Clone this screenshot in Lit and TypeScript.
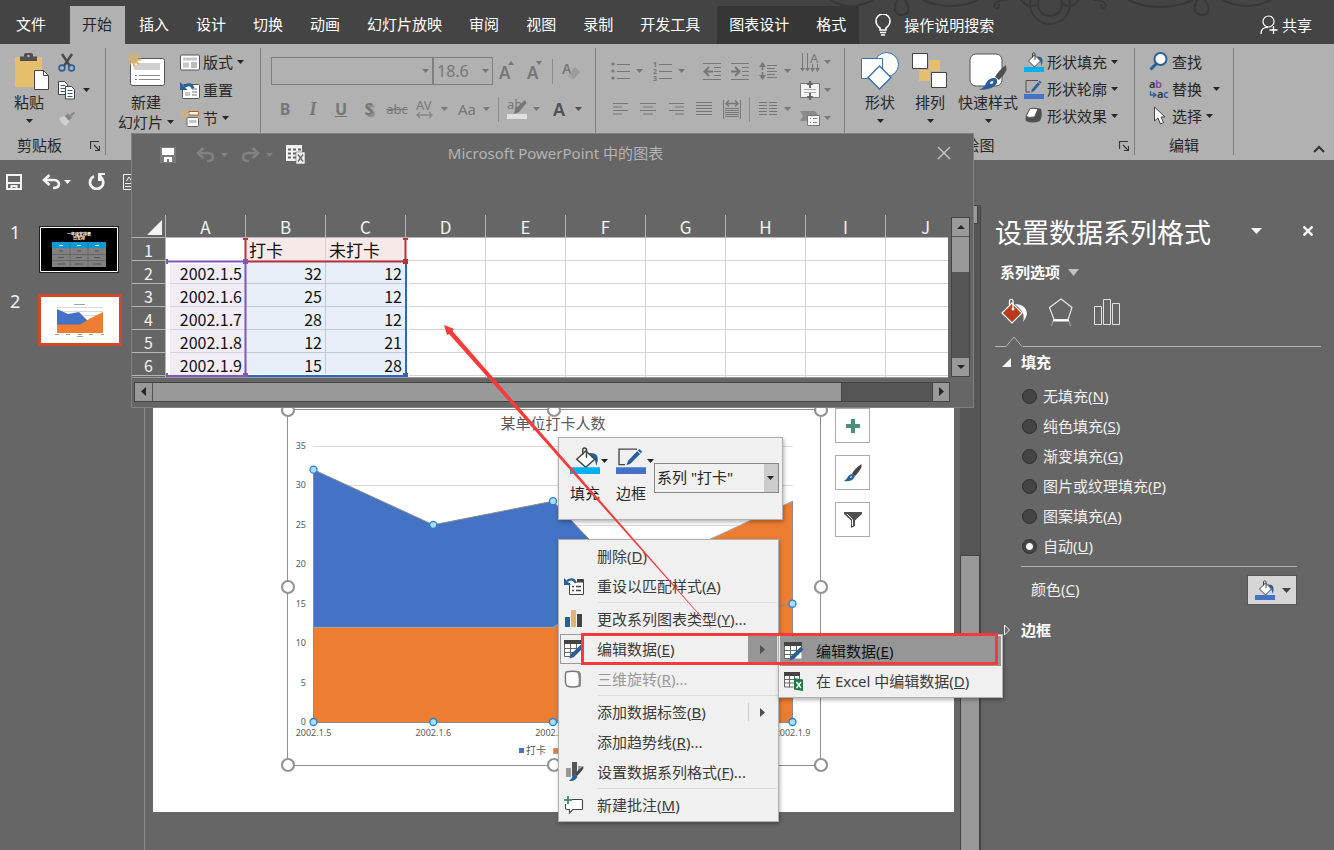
import { LitElement, html, svg, css, nothing } from "lit";
import { customElement, state } from "lit/decorators.js";

const caret = html`<svg class="caret" width="7" height="4" viewBox="0 0 7 4"><path d="M0 0h7L3.5 4z" fill="currentColor"/></svg>`;

const ic = (w: number, h: number, body: unknown) =>
  html`<svg class="ic" width=${w} height=${h} viewBox="0 0 ${w} ${h}" fill="none" aria-hidden="true">${body}</svg>`;

const bucket = (bar: string, w = 20, h = 20) => html`<svg class="ic" width=${w} height=${h} viewBox="0 0 20 20" fill="none" preserveAspectRatio="none" aria-hidden="true">
  <path d="M12.500 4.500C18 4 20 7 17.500 14C17 10 16 8 14.500 7z" fill="#2a6099"/>
  <path d="M10.500 3L16.500 9L10.500 15L4.500 9z" fill="#fff" stroke="#444" stroke-width="1"/>
  <path d="M8.500 5.500V1.500Q9.500 0 11 1.500V8" stroke="#444" stroke-width="1"/>
  <rect y="15" width="20" height="5" fill=${bar}/></svg>`;

const outline = (w = 20, h = 20) => html`<svg class="ic" width=${w} height=${h} viewBox="0 0 20 20" fill="none" preserveAspectRatio="none" aria-hidden="true">
  <path d="M14 1.500H2V13H6" stroke="#444" stroke-width=".9"/>
  <path d="M7 13.500L8 10.200L15.500 1.500L17.500 3.500L9.800 12.300z" fill="#2a6099"/>
  <path d="M14.300 2.800L16.300 4.900" stroke="#eee" stroke-width=".7"/>
  <rect y="15" width="20" height="5" fill="#4472c4"/></svg>`;

const sheetPen = svg`<path d="M.5 .5h17v16H.5z" fill="#fff"/><path d="M0 0h18v4H0z" fill="#444"/><path d="M.5 4v12.500h8M.5 8.500h17M.5 12.500h12M6.500 4v12.500M12.500 4v8M17.500 4v6" stroke="#666"/><path d="M5.500 18.500L7 14L16.500 5L19.500 7.500L10 17z" fill="#2a6099"/>`;

const icons = {
  paste: html`<svg class="ic" width="40" height="40" viewBox="-6 0 40 40" fill="none" aria-hidden="true"><path d="M0 5h27v30H0z" fill="#e6bf6d"/><path d="M5 9V4.500h4V2.500Q9 1 11 1h5Q18 1 18 2.500v2h4V9z" fill="#505050"/><circle cx="13.500" cy="4" r="1.300" fill="#b1b1b1"/><path d="M19.500 18.500h9l5 5V37.500h-14z" fill="#fff" stroke="#444"/><path d="M28.500 18.500v5h5" stroke="#444"/></svg>`,
  cut: ic(18, 19, svg`<path d="M4 1L12 13M14 1L6 13" stroke="#4a4a4a" stroke-width="2.400"/><circle cx="4" cy="15" r="2.900" stroke="#2a6099" stroke-width="1.600"/><circle cx="13.500" cy="15" r="2.900" stroke="#2a6099" stroke-width="1.600"/>`),
  copy: ic(18, 19, svg`<path d="M.5 .5h6l3 3v10h-9z" fill="#fff" stroke="#444"/><path d="M2.500 4.500h5M2.500 7.500h5M2.500 10.500h5" stroke="#2a6099"/><path d="M7.500 5.500h6l3 3v9.500h-9z" fill="#fff" stroke="#444"/><path d="M9.500 9.500h5M9.500 12.500h5M9.500 15.500h5" stroke="#2a6099"/>`),
  painter: ic(18, 17, svg`<path d="M1 8.500L6 6L11.500 11.500L8 16Q3 14 1 8.500z" fill="#d0d0d0"/><path d="M7 6L10 3.500L14 7.500L11 10.500z" fill="#858585"/><path d="M12 5L16 1.500L17 3L13.500 6.500z" fill="#858585"/>`),
  newSlide: ic(38, 40, svg`<rect x="3.500" y="6.500" width="34" height="27" rx="2" fill="#fff" stroke="#555"/><path d="M13 11h20v7H7v-4z" fill="#d0d0d0"/><path d="M8 23.500h2M12 23.500h21M8 27.500h2M12 27.500h21" stroke="#888"/><g stroke="#e0b060" stroke-width="2"><circle cx="7" cy="7.500" r="3.200" fill="#b1b1b1"/><path d="M7 .5v3M7 11.500v3M0 7.500h3M11 7.500h3M2 2.500l2 2M10 10.500l2 2M12 2.500l-2 2M4 10.500l-2 2"/></g>`),
  layout: ic(20, 17, svg`<rect x=".5" y="1" width="19" height="15" rx="1" fill="#fff" stroke="#555"/><path d="M3 3.500h14v3H3zM3 8.500h6v5H3z" fill="#c8c8c8"/><path d="M11 9h6M11 11h6M11 13h6" stroke="#777"/>`),
  reset: ic(20, 18, svg`<rect x="2.500" y="3.500" width="17" height="14" rx="1" fill="#fff" stroke="#555"/><path d="M5 11h5v4H5z" fill="#c8c8c8"/><path d="M12 8h5M12 11h5M12 14h5" stroke="#777"/><path d="M13 7.500Q11 1 4 5.500" stroke="#2a6099" stroke-width="3"/><path d="M0 1v8h7.500z" fill="#2a6099"/>`),
  section: ic(20, 18, svg`<path d="M9 2.500h9.500v3.500H9z" fill="#fff" stroke="#c55a11"/><rect x="7" y="8.500" width="11.500" height="9" rx="1" fill="#fff" stroke="#666"/><path d="M9 11h7.500v3H9z" fill="#c8c8c8"/><g stroke="#e0b060"><circle cx="4.500" cy="4.500" r="2"/><path d="M4.500 0v2M4.500 7v2M0 4.500h2M7 4.500h2M1.500 1.500l1.500 1.500M6 6l1.500 1.500M7.500 1.500L6 3M3 6L1.500 7.500"/></g>`),
  grow: ic(16, 22, svg`<text x="0" y="19" class="gA">A</text><path d="M9 5h6L12 1z" fill="#777"/>`),
  shrink: ic(16, 22, svg`<text x="0" y="19" class="gA">A</text><path d="M9 1h6L12 5z" fill="#777"/>`),
  eraser: ic(22, 22, svg`<text x="2" y="14" class="gB">A</text><path d="M9 15L15 7L20 12L14 19H11L7 15z" fill="#9c9c9c"/><path d="M7 16L10 14L14 18L12 20z" fill="#a6a6a6"/>`),
  av: ic(22, 24, svg`<text x="2" y="13" class="gC">AV</text><path d="M3 18h15M6 15l-3 3l3 3M15 15l3 3l-3 3" stroke="#888" stroke-width="1.300"/>`),
  high: ic(20, 24, svg`<text x="0" y="12" class="gC">ab</text><path d="M8 12L18 3L19.500 6L12 15L7 17z" fill="#777"/><path d="M0 17h20v5H0z" fill="#e0e0e0"/>`),
  bullets: ic(19, 18, svg`<g fill="#777"><circle cx="2" cy="2" r="1.600"/><circle cx="2" cy="9" r="1.600"/><circle cx="2" cy="16" r="1.600"/></g><path d="M6 2.500h13M6 9.500h13M6 16.500h13" stroke="#777"/>`),
  numbers: ic(19, 22, svg`<text x="0" y="7" class="gN">1</text><text x="0" y="14" class="gN">2</text><text x="0" y="21" class="gN">3</text><path d="M6 4.500h13M6 11.500h13M6 18.500h13" stroke="#777"/>`),
  outdent: ic(18, 17, svg`<path d="M0 .5h18M0 16.500h18M11 4.500h7M11 8.500h7M11 12.500h7" stroke="#777"/><path d="M10 8.500H3M6 4L1.500 8.500L6 13" stroke="#777" stroke-width="2"/>`),
  indent: ic(18, 17, svg`<path d="M0 .5h18M0 16.500h18M11 4.500h7M11 8.500h7M11 12.500h7" stroke="#777"/><path d="M0 8.500H7M4 4L8.500 8.500L4 13" stroke="#777" stroke-width="2"/>`),
  spacing: ic(18, 18, svg`<path d="M8 3.500h10M8 6.500h8M8 9.500h10M8 12.500h8M8 15.500h10" stroke="#777"/><path d="M3.500 1v7M3.500 10v7" stroke="#777" stroke-width="1.600"/><path d="M0 5L3.500 0L7 5zM0 13L3.500 18L7 13z" fill="#777"/>`),
  left: ic(15, 12, svg`<path d="M0 .5h15M0 4h9M0 7.500h15M0 11h9" stroke="#777"/>`),
  center: ic(16, 12, svg`<path d="M0 .5h16M3 4h10M0 7.500h16M3 11h10" stroke="#777"/>`),
  right: ic(15, 12, svg`<path d="M0 .5h15M6 4h9M0 7.500h15M6 11h9" stroke="#777"/>`),
  justify: ic(16, 14, svg`<path d="M0 .5h16M0 3.500h16M0 6.500h16M0 9.500h16M0 12.500h16" stroke="#777"/>`),
  distribute: ic(18, 19, svg`<path d="M.5 0v19M17.500 0v19" stroke="#777"/><path d="M2 8.500h14M2 10.500h14M2 12.500h14M2 14.500h14M2 16.500h14" stroke="#777"/><path d="M3 3.500h12M6 .5l-3 3l3 3M12 .5l3 3l-3 3" stroke="#777" stroke-width="1.500"/>`),
  columns: ic(18, 14, svg`<path d="M0 .5h8M0 3.500h8M0 6.500h8M0 9.500h8M0 12.500h8M10 .5h8M10 3.500h8M10 6.500h8M10 9.500h8M10 12.500h8" stroke="#777"/>`),
  textDir: ic(20, 24, svg`<path d="M2.500 3v18M7.500 3v18M12.500 14v8M17.500 14v8" stroke="#777"/><path d="M0 18l2.500 3.500L5 18zM5 18l2.500 3.500L10 18zM10 18l2.500 3.500L15 18zM15 18l2.500 3.500L20 18z" fill="#777"/><text x="10" y="13" class="gC">A</text>`),
  alignText: ic(20, 19, svg`<path d="M.5 2.500h19v14H.5z" fill="#f2f2f2" stroke="#777"/><path d="M4 8.500h12M4 11.500h12" stroke="#aaa"/><path d="M10 0v7M10 12v7" stroke="#666" stroke-width="2"/><path d="M6.500 4L10 0l3.500 4zM6.500 15L10 19l3.500-4z" fill="#666"/>`),
  smartArt: ic(20, 17, svg`<path d="M0 1h15l3 4v6H0l3-5z" fill="#8a8a8a"/><path d="M7.500 5.500h12v10h-12z" fill="#f2f2f2" stroke="#777"/><path d="M10 8.500h1M13 8.500h4M10 12.500h1M13 12.500h4" stroke="#888"/>`),
  shapes: ic(38, 40, svg`<circle cx="25.500" cy="12.500" r="12" fill="#fff" stroke="#3a6fa8"/><path d="M.5 6.500h21v20H.5z" fill="#fff" stroke="#3a6fa8"/><path d="M18.500 14L30 25.500L18.500 37L7 25.500z" fill="#fff" stroke="#3a6fa8" stroke-width="1.400"/>`),
  arrange: ic(36, 40, svg`<path d="M17 8h11v11H17zM7 18h11v11H7z" fill="#e6bf6d"/><path d="M.5 1.500h15v15H.5zM19.500 20.500h15v15h-15z" fill="#fff" stroke="#444"/>`),
  quick: ic(38, 40, svg`<rect x="1" y="2" width="32" height="32" rx="6" fill="#fff" stroke="#555"/><path d="M37 13Q30 18 26 25L30 28Q36 22 37.500 18z" fill="#505050"/><path d="M25 26Q29 26 28 31Q25 38 10 38Q16 35 17 31Q20 26 25 26z" fill="#2a6099"/><path d="M24 29Q21 29 21 32Q25 32 24 29z" fill="#fff"/>`),
  effect: ic(20, 18, svg`<path d="M6 1Q12 0 17 2Q19 8 16 14Q8 17 2 14Q0 11 6 1z" fill="#505050"/><path d="M6 1.500Q10 1 14 2L10.500 10Q6 11 2 9.500z" fill="#fff" stroke="#444" stroke-width=".8"/>`),
  find: ic(20, 19, svg`<circle cx="11.500" cy="7" r="6" fill="#fff" stroke="#2a6099" stroke-width="2"/><path d="M7.500 11.500L1.500 17.500" stroke="#2a6099" stroke-width="3"/>`),
  replace: ic(20, 24, svg`<text x="0" y="11" class="gR">a</text><text x="6" y="11" class="gR gP">b</text><text x="8" y="21" class="gR">a</text><text x="14" y="21" class="gR gBlue">c</text><path d="M1.500 14v4h5M4 15.500l3 2.500l-3 2.500" stroke="#2a6099" stroke-width="1.300"/>`),
  select: ic(20, 19, svg`<path d="M5.500 1v14l3.500-3l2.500 6l3-1.500l-2.500-5.500h4z" fill="#fff" stroke="#444"/>`),
  save: ic(16, 16, svg`<path d="M1 1h14v14H1z" stroke="#f2f2f2" stroke-width="2"/><path d="M2 9h12" stroke="#f2f2f2" stroke-width="2"/><path d="M5.500 15v-3h5v3" stroke="#f2f2f2" stroke-width="2"/>`),
  undo: ic(19, 16, svg`<path d="M2 6H12Q17 6.500 17 10.500Q16.500 14 11 14" stroke="currentColor" stroke-width="2.600"/><path d="M7.500 1L2 6l5.500 5" stroke="currentColor" stroke-width="2.600"/>`),
  redoTurn: ic(18, 17, svg`<path d="M6 3.300A6.600 6.600 0 1 0 12.500 4" stroke="#f2f2f2" stroke-width="2.800"/><path d="M10 0h7v2h-3.500v6H10z" fill="#f2f2f2"/>`),
  page: ic(14, 16, svg`<path d="M.5 .5h13v15H.5z" stroke="#f2f2f2"/><path d="M3.500 7l2.500-4l2.500 4M2 9.500h10M2 12.500h10" stroke="#f2f2f2"/>`),
  redo: ic(19, 16, svg`<path d="M17 6H7Q2 6.500 2 10.500Q2.500 14 8 14" stroke="currentColor" stroke-width="2.600"/><path d="M11.500 1L17 6l-5.500 5" stroke="currentColor" stroke-width="2.600"/>`),
  saveLit: ic(16, 16, svg`<path d="M0 0h16v16H0z" fill="#7a7a7a"/><path d="M2 1h12v7H2zM4 10h8v5H9v-3H7v3H4z" fill="#fff"/>`),
  excelSheet: ic(20, 20, svg`<path d="M0 0h16v16H0z" fill="#f2f2f2"/><path d="M2 4.500h3M7 4.500h3M12 4.500h3M2 8.500h3M7 8.500h3M12 8.500h3M2 12.500h3M7 12.500h3" stroke="#666" stroke-width="2"/><path d="M10 7h9v12h-9z" fill="#f2f2f2" stroke="#666" stroke-width=".6"/><path d="M12 9.500l5 7M17 9.500l-5 7" stroke="#666" stroke-width="1.400"/>`),
  menuReset: ic(20, 19, svg`<path d="M5.500 6V17.500h14V2.500H13" fill="#fff" stroke="#444"/><path d="M13 4h6" stroke="#444" stroke-width="3"/><path d="M8 9.500h2M8 13.500h2M12 9.500h5M12 13.500h5" stroke="#444" stroke-width="1.300"/><path d="M12 6Q9 0 3 4" stroke="#2a6099" stroke-width="2.400"/><path d="M0 1v7h7z" fill="#2a6099"/>`),
  menuChart: ic(20, 18, svg`<path d="M1 7h5v10H1z" fill="#2a6099"/><path d="M7 0h5v17H7z" fill="#dfb571"/><path d="M13 4h5v13h-5z" fill="#444"/>`),
  menuEdit: ic(20, 19, sheetPen),
  menuRotate: ic(20, 19, svg`<path d="M2 2Q9 .5 15 2Q17 9 15.500 16Q8 18 3 16Q1 14 1.500 10Q1 5 2 2z" fill="#fafafa" stroke="#777" stroke-width="1.400"/><path d="M13 1.500Q17.500 2 17 5V14Q17 17 14 17Q16 9 13 1.500z" fill="#888"/>`),
  menuFormat: ic(20, 20, svg`<path d="M2 6h5v9H2z" fill="#999"/><path d="M8 0h5v11l-3 3H8z" fill="#555"/><path d="M14 4h4l-4 5z" fill="#999"/><path d="M19 4Q14 8 11 12l2 2Q18 9 19.500 6z" fill="#444"/><path d="M11 12.500Q15 14 12 17Q9 20 5 18.500Q8 17 8 15Q9 12.500 11 12.500z" fill="#2a6099"/>`),
  menuComment: ic(20, 19, svg`<path d="M8 3.500H17.500Q18.500 3.500 18.500 4.500V12.500Q18.500 13.500 17.500 13.500H9L5.500 17V13.500H3.500Q1.500 13.500 1.500 12V8" fill="#fff" stroke="#444" stroke-width="1.100"/><path d="M4 0v8M0 4h8" stroke="#4c9077" stroke-width="2"/>`),
  menuExcel: ic(20, 19, svg`<path d="M.5 .5h15v14H.5z" fill="#fff"/><path d="M0 0h16v4H0z" fill="#444"/><path d="M.5 4v11h9M.5 7.500h15M.5 11h10M5.500 4v11M10.500 4v5M15.500 4v4" stroke="#666"/><path d="M10 6l9 1.500v11.500l-9-1.500z" fill="#1d7a46"/><path d="M12.500 10l4.500 6M17 10l-4.500 6" stroke="#fff" stroke-width="1.400"/>`),
};

const key = (text: string, letter: string, tail = "") => html`${text}(<u>${letter}</u>)${tail}`;

const sharedText = css`
  button { background: none; border: 0; padding: 0; margin: 0; font: inherit; color: inherit; display: flex; align-items: center; white-space: nowrap; }
  .ic, .caret { flex: none; display: block; }
`;

@customElement("office-ribbon")
class OfficeRibbon extends LitElement {
  static styles = [sharedText, css`
    :host { display: block; color: #262626; }
    .tabs { display: flex; gap: 2px; height: 38px; padding-top: 6px; background: #444; color: #fff; position: relative; }
    .swirl { position: absolute; top: 0; left: 815px; }
    .tab { padding: 0 13px 3px 12px; height: 38px; box-sizing: border-box; }
    .file { padding-left: 16px; padding-right: 22px; }
    .active { background: #b1b1b1; color: #262626; }
    .context { display: flex; gap: 2px; margin-left: 2px; background: #363636; }
    .tell { gap: 13px; padding-left: 14px; padding-bottom: 1px; position: relative; }
    .share { gap: 4px; margin-left: auto; margin-right: 22px; position: relative; }
    .ribbon { display: flex; height: 112px; padding-top: 4px; background: #b1b1b1; }
    .group { display: flex; flex-direction: column; height: 107px; border-right: 1px solid #7d7d7d; box-sizing: border-box; }
    .body { display: flex; height: 90px; }
    .foot { display: grid; grid-template-columns: 1fr 20px; line-height: 19px; height: 19px; text-align: center; }
    .foot button { justify-content: center; }
    .clip { width: 106px; } .clip .foot span { padding-right: 6px; }
    .slides { width: 155px; } .slides .body { padding-left: 6px; }
    .font { width: 335px; color: #777; } .para { width: 249px; color: #777; }
    .draw { width: 290px; } .draw .body { padding-left: 7px; }
    .edit { width: 99px; } .edit .foot { grid-template-columns: 1fr; }
    .edit .body { padding-left: 14px; }
    .big { flex-direction: column; padding-top: 4px; height: 84px; width: 58px; line-height: 20px; }
    .big.w68 { width: 68px; } .big.w56 { width: 56px; } .big.w44 { width: 44px; } .big.w72 { width: 72px; }
    .big .caret { margin-top: 7px; }
    .big .line { display: flex; align-items: center; gap: 4px; }
    .big .line .caret { margin-top: 0; }
    .stack { display: flex; flex-direction: column; align-items: flex-start; }
    .stack button { height: 28px; gap: 3px; }
    .stack.low button { height: 27px; }
    .stack .caret { margin-left: 1px; }
    .stack .far { margin-left: 4px; }
    .para .stack { padding-left: 4px; }
    .rows { display: block; }
    .row { display: flex; align-items: center; height: 46px; padding-left: 10px; }
    .row.second { height: 30px; }
    .cell { width: 28px; height: 26px; justify-content: center; }
    .drop { width: 42px; height: 26px; }
    .drop .hold { width: 28px; display: flex; justify-content: center; margin-right: 2px; }
    .sep { width: 1px; height: 25px; background: #8c8c8c; margin: 0 4px 0 3px; }
    .clear { background: none; }
    .box { position: relative; display: flex; align-items: center; }
    .box .caret { position: absolute; right: 4px; pointer-events: none; }
    select { appearance: none; background: #b1b1b1; border: 1px solid #808080; border-radius: 0; height: 28px; padding: 0 0 0 3px; font: 16px "Noto Sans", sans-serif; color: #777; margin: 0; opacity: 1; }
    .name { width: 162px; } .size { width: 60px; }
    .b { font-weight: 700; font-size: 16px; } .i { font-style: italic; font-family: "Liberation Serif", serif; font-size: 18px; }
    .ul { text-decoration: underline; } .sh { text-shadow: 2px 2px 1px #888; } .st { text-decoration: line-through; font-size: 13px; }
    .dark { color: #505050; font-size: 18px; font-weight: 600; }
    .gA { font: 600 17px "Noto Sans", sans-serif; fill: #777; } .gB { font: 600 14px "Noto Sans", sans-serif; fill: #777; }
    .gC { font: 13px "Noto Sans", sans-serif; fill: #777; } .gN { font: bold 7px "Noto Sans", sans-serif; fill: #777; }
    .gR { font: 600 11px "Noto Sans", sans-serif; fill: #333; } .gP { fill: #7a4a9e; } .gBlue { fill: #2a6099; }
    .collapse { margin: auto 9px 7px auto; }
  `];

  private tab(t: string, cls = "") { return html`<button class="tab ${cls}">${t}</button>`; }
  private cell(c: unknown, label: string, cls = "") { return html`<button class="cell ${cls}" aria-label=${label}>${c}</button>`; }
  private drop(c: unknown, label: string, cls = "") { return html`<button class="drop ${cls}" aria-label=${label}><span class="hold">${c}</span>${caret}</button>`; }
  private launcher = html`<button aria-label="launcher">${ic(10, 10, svg`<path d="M.5 8V.5H9M4 4l5 5M9.500 5v4.500H5" stroke="#333" stroke-width="1.200"/>`)}</button>`;

  render() {
    const i = icons;
    return html`
      <nav class="tabs">
        <svg class="swirl" width="500" height="30" fill="none" stroke="#383838" stroke-width="2">
          <path d="M15 0Q35 12 58 0M313 0Q345 14 378 0M408 0Q432 12 456 0M108 0Q135 12 164 0"/>
          <path d="M84 -2C76 8 80 15 87 15C94 15 97 8 88 -2M384 -2C376 8 380 15 387 15C394 15 397 8 388 -2"/>
          <circle cx="235" cy="4" r="20"/><circle cx="235" cy="4" r="12"/>
          <path d="M192 0Q180 0 179 6Q184 12 184 4M206 0Q214 10 222 4M248 4Q256 10 264 0M278 0Q290 0 291 6Q286 12 286 4"/>
        </svg>
        ${this.tab("文件", "file")}${this.tab("开始", "active")}
        ${["插入", "设计", "切换", "动画", "幻灯片放映", "审阅", "视图", "录制", "开发工具"].map((t) => this.tab(t))}
        <span class="context">${this.tab("图表设计")}${this.tab("格式")}</span>
        <button class="tell">${ic(16, 22, svg`<path d="M5 16V14Q1 11 1 7A7 7 0 0 1 15 7Q15 11 11 14V16z" stroke="#fff" stroke-width="1.600"/><path d="M5 18.500h6M6 21h4" stroke="#fff" stroke-width="1.500"/>`)}操作说明搜索</button>
        <button class="share">${ic(18, 20, svg`<circle cx="8.500" cy="6.500" r="5.500" stroke="#fff" stroke-width="1.200"/><path d="M1 19Q1 12 8 12.500M13.500 11v8M9.500 15h8" stroke="#fff" stroke-width="1.300"/>`)}共享</button>
      </nav>
      <div class="ribbon">
        <section class="group clip">
          <div class="body">
            <button class="big">${i.paste}<span>粘贴</span>${caret}</button>
            <div class="stack"><button aria-label="cut">${i.cut}</button><button aria-label="copy">${i.copy}<span></span>${caret}</button><button aria-label="painter">${i.painter}</button></div>
          </div>
          <div class="foot"><span>剪贴板</span>${this.launcher}</div>
        </section>
        <section class="group slides">
          <div class="body">
            <button class="big w68">${i.newSlide}<span>新建</span><span class="line">幻灯片${caret}</span></button>
            <div class="stack"><button>${i.layout}版式${caret}</button><button>${i.reset}重置</button><button>${i.section}节${caret}</button></div>
          </div>
        </section>
        <section class="group font">
          <div class="rows">
            <div class="row">
              <span class="box"><select class="name" aria-label="font"><option></option></select>${caret}</span>
              <span class="box"><select class="size" aria-label="size"><option>18.6</option></select>${caret}</span>
              ${this.cell(i.grow, "grow")}${this.cell(i.shrink, "shrink")}<span class="sep"></span>${this.cell(i.eraser, "clear")}
            </div>
            <div class="row second">
              ${this.cell("B", "bold", "b")}${this.cell("I", "italic", "b i")}${this.cell("U", "underline", "b ul")}${this.cell("S", "shadow", "b sh")}${this.cell("abc", "strike", "st")}
              ${this.drop(i.av, "spacing")}${this.drop("Aa", "case")}<span class="sep"></span>${this.drop(i.high, "highlight")}${this.drop("A", "color", "dark")}
            </div>
          </div>
        </section>
        <section class="group para">
          <div class="body">
            <div class="rows">
              <div class="row">${this.drop(i.bullets, "bullets")}${this.drop(i.numbers, "numbering")}<span class="sep clear"></span>${this.cell(i.outdent, "outdent")}${this.cell(i.indent, "indent")}${this.drop(i.spacing, "line")}</div>
              <div class="row second">${this.cell(i.left, "left")}${this.cell(i.center, "center")}${this.cell(i.right, "right")}${this.cell(i.justify, "justify")}${this.cell(i.distribute, "distribute")}<span class="sep"></span>${this.drop(i.columns, "columns")}</div>
            </div>
            <div class="stack">
              <button aria-label="direction">${i.textDir}${caret}</button><button aria-label="align text">${i.alignText}${caret}</button><button aria-label="smartart">${i.smartArt}${caret}</button>
            </div>
          </div>
        </section>
        <section class="group draw">
          <div class="body">
            <button class="big w56">${i.shapes}<span>形状</span>${caret}</button>
            <button class="big w44">${i.arrange}<span>排列</span>${caret}</button>
            <button class="big w72">${i.quick}<span>快速样式</span>${caret}</button>
            <div class="stack low"><button>${bucket("#00b0f0")}形状填充${caret}</button><button>${outline()}形状轮廓${caret}</button><button>${i.effect}形状效果${caret}</button></div>
          </div>
          <div class="foot"><span>绘图</span>${this.launcher}</div>
        </section>
        <section class="group edit">
          <div class="body"><div class="stack low"><button>${i.find}查找</button><button>${i.replace}替换<span class="far"></span>${caret}</button><button>${i.select}选择${caret}</button></div></div>
          <div class="foot"><span>编辑</span></div>
        </section>
        <button class="collapse" aria-label="collapse">${ic(12, 8, svg`<path d="M1 7l5-5l5 5" stroke="#333" stroke-width="2"/>`)}</button>
      </div>`;
  }
}

@customElement("series-chart")
class SeriesChart extends LitElement {
  static styles = css`
    :host { display: block; }
    svg { display: block; }
    .t { font: 15px "Noto Sans CJK SC", sans-serif; fill: #595959; }
    .ax { font: 9px "Noto Sans", "Noto Sans CJK SC", sans-serif; fill: #595959; }
    .lg { font: 10px "Noto Sans CJK SC", sans-serif; fill: #595959; }
  `;
  private labels = ["2002.1.5", "2002.1.6", "2002.1.7", "2002.1.8", "2002.1.9"];
  private a = [32, 25, 28, 12, 15];
  private b = [12, 12, 12, 21, 28];
  render() {
    const x = (k: number) => 35.5 + k * 119.75;
    const y = (v: number) => 323 - v * 7.886;
    const area = (d: number[]) => `${x(0)},${y(0)} ${d.map((v, k) => `${x(k)},${y(v)}`).join(" ")} ${x(4)},${y(0)}`;
    const line = (d: number[]) => d.map((v, k) => `${x(k)},${y(v)}`).join(" ");
    return html`<svg width="553" height="376" viewBox="0 0 553 376" fill="none">
      <path d="M9.500 10.500h533v356h-533z" stroke="#8f8f8f"/>
      ${[0, 5, 10, 15, 20, 25, 30, 35].map((v) => svg`<path d="M35 ${Math.round(y(v)) + 0.5}H515" stroke="#d9d9d9"/><text class="ax" x="28" y=${y(v) + 3} text-anchor="end">${v}</text>`)}
      <polygon points=${area(this.a)} fill="#4472c4"/><polyline points=${line(this.a)} stroke="#8a8a8a"/>
      <polygon points=${area(this.b)} fill="#ed7d31"/><polyline points=${line(this.b)} stroke="#a5a5a5"/>
      <path d="M${x(0)} ${y(32)}V323.500H${x(4)}V${y(28)}" stroke="#8a8a8a"/>
      <path d="M${x(3)} ${y(12)}L${x(4)} ${y(15)}" stroke="#8a8a8a"/>
      ${this.labels.map((t, k) => svg`<text class="ax" x=${x(k)} y="337" text-anchor="middle">${t}</text>`)}
      ${this.a.map((v, k) => [v, 0].map((n) => svg`<circle cx=${x(k)} cy=${y(n)} r="3.500" fill="#b3daf5" stroke="#1b83d8" stroke-width="1.300"/>`))}
      <text class="t" x="275" y="30" text-anchor="middle">某单位打卡人数</text>
      <path d="M241 349h5v5h-5z" fill="#4472c4"/><text class="lg" x="248" y="355">打卡</text>
      <path d="M275.500 349.500h5v5h-5z" fill="#ed7d31" stroke="#a5a5a5"/><text class="lg" x="284" y="355">未打卡</text>
      ${[[10, 11], [276, 11], [543, 11], [10, 188], [543, 188], [10, 366], [276, 366], [543, 366]].map(([cx, cy]) => svg`<circle cx=${cx} cy=${cy} r="6" fill="#fff" stroke="#949494" stroke-width="2.200"/>`)}
    </svg>`;
  }
}

@customElement("data-window")
class DataWindow extends LitElement {
  static styles = [sharedText, css`
    :host { display: block; box-sizing: border-box; border: 1px solid #808080; background: #666; }
    .bar { display: grid; grid-template-columns: 1fr auto 1fr; align-items: center; height: 37px; padding: 0 22px 0 28px; margin-bottom: 44px; color: #b4b4b4; }
    .tools { display: flex; align-items: center; gap: 13px; padding-top: 4px; }
    .tools .faded { color: #828282; gap: 6px; }
    .tools .first { padding-right: 7px; }
    .close { justify-self: end; }
    .mid { display: flex; gap: 3px; padding-right: 3px; align-items: flex-start; }
    .sheet { flex: 1; height: 163px; overflow: hidden; position: relative; border-bottom: 1px solid #999; box-sizing: border-box; }
    table { border-collapse: separate; border-spacing: 0; table-layout: fixed; width: 834px; font: 17px "Noto Sans CJK SC", sans-serif; color: #111; background: #fff; }
    .c0 { width: 34px; } .cn { width: 80px; }
    th { background: #666; color: #f2f2f2; font-weight: 400; border-right: 1px solid #b5b5b5; border-bottom: 1px solid #b5b5b5; text-align: center; }
    th, td { height: 20px; line-height: 20px; padding: 2px 3px 0; overflow: hidden; white-space: nowrap; }
    td { border-right: 1px solid #d4d4d4; border-bottom: 1px solid #d4d4d4; text-align: right; }
    td.head { text-align: left; background: #f8e9e9; }
    td.cat { background: #f1ecf6; } td.val { background: #e8eff9; border-color: #c3c9d4; }
    td.cat, td.val, tbody th { font-size: 16px; }
    .corner { padding: 0; } .corner svg { display: block; margin: 3px 0 0 15px; }
    .range { position: absolute; left: 33px; top: 19px; pointer-events: none; }
    .vs { display: flex; flex-direction: column; width: 17px; height: 158px; margin-top: 2px; background: #555; border: 1px solid #444; }
    .hs { display: flex; margin: 4px 23px 0 2px; background: #555; height: 18px; border: 1px solid #444; }
    .sq { width: 17px; height: 18px; background: #999; justify-content: center; color: #262626; flex: none; }
    .vs .thumb { height: 35px; background: #999; margin: 1px 0 auto; }
    .hs .thumb { width: 688px; background: #999; margin: 0 auto 0 1px; border-right: 1px solid #444; }
    .hs .end { border-left: 1px solid #444; }
  `];
  private rows = [["", "打卡", "未打卡"], ["2002.1.5", "32", "12"], ["2002.1.6", "25", "12"], ["2002.1.7", "28", "12"], ["2002.1.8", "12", "21"], ["2002.1.9", "15", "28"], ["", "", ""]];
  private arrow(d: string, label: string, cls = "") { return html`<button class="sq ${cls}" aria-label=${label}>${ic(10, 10, svg`<path d=${d} fill="currentColor"/>`)}</button>`; }
  render() {
    const cols = "ABCDEFGHIJ".split("");
    return html`
      <div class="bar">
        <div class="tools"><button class="first" aria-label="save">${icons.saveLit}</button><button class="faded" aria-label="undo">${icons.undo}${caret}</button><button class="faded" aria-label="redo">${icons.redo}${caret}</button><button aria-label="excel">${icons.excelSheet}</button></div>
        <span>Microsoft PowerPoint 中的图表</span>
        <button class="close" aria-label="close">${ic(14, 14, svg`<path d="M1 1l12 12M13 1L1 13" stroke="#c8c8c8" stroke-width="1.400"/>`)}</button>
      </div>
      <div class="mid">
        <div class="sheet">
          <table>
            <colgroup><col class="c0">${cols.map(() => html`<col class="cn">`)}</colgroup>
            <thead><tr><th class="corner"><svg width="15" height="16"><path d="M15 0v15H0z" fill="#f2f2f2"/></svg></th>${cols.map((c) => html`<th>${c}</th>`)}</tr></thead>
            <tbody>${this.rows.map((r, n) => html`<tr><th>${n < 6 ? n + 1 : nothing}</th>${cols.map((_, k) => html`<td class=${n > 5 || k > 2 ? "" : n === 0 ? (k ? "head" : "") : k === 0 ? "cat" : "val"}>${r[k] ?? nothing}</td>`)}</tr>`)}</tbody>
          </table>
          <svg class="range" width="246" height="146" fill="none" stroke-width="2">
            <path d="M82 142H242V28" stroke="#fff" stroke-width="4"/><path d="M3 26v117M3 28H80" stroke="#fff" stroke-width="4"/>
            <path d="M80 27.500H2M80.500 27v115M80 142H2" stroke="#7f57b8"/>
            <path d="M82 142H241V28" stroke="#2c67c4"/>
            <path d="M80.500 26V4M82 27.500H241M240.500 26V4" stroke="#be2f40"/>
            <path d="M238 25h5v5h-5zM78 4h5v2h-5zM238 4h5v2h-5z" fill="#be2f40"/>
            <path d="M78 25h5v5h-5zM78 139h5v5h-5zM1 25h2v5H1zM1 139h2v5H1z" fill="#7f57b8"/><path d="M238 139h5v5h-5z" fill="#2c67c4"/>
          </svg>
        </div>
        <div class="vs">${this.arrow("M1 7h8L5 3z", "up")}<span class="thumb"></span>${this.arrow("M1 3h8L5 7z", "down")}</div>
      </div>
      <div class="hs">${this.arrow("M7 0v9L2 4.500z", "left")}<span class="thumb"></span>${this.arrow("M3 0v9l5-4.500z", "right", "end")}</div>`;
  }
}

@customElement("context-menus")
class ContextMenus extends LitElement {
  static styles = [sharedText, css`
    :host { display: block; color: #3b3b3b; }
    .mini, .menu, .sub { position: absolute; background: #f0f0f0; border: 1px solid #b0b0b0; box-sizing: border-box; box-shadow: 1px 2px 4px rgba(0,0,0,.3); }
    .mini { left: 558px; top: 437px; width: 225px; height: 83px; display: flex; align-items: flex-start; padding: 9px 3px 0 11px; color: #262626; }
    .tool { flex-direction: column; width: 46px; align-items: flex-start; line-height: 20px; gap: 9px; }
    .tool .up { display: flex; align-items: center; gap: 1px; }
    .box { position: relative; display: flex; align-items: center; margin: 16px 0 0 -8px; flex: 1; }
    .box .caret { position: absolute; right: 5px; pointer-events: none; }
    select { appearance: none; width: 100%; height: 30px; border: 1px solid #888; border-radius: 0; font: inherit; color: #262626; padding: 0 0 3px 2px; background: linear-gradient(90deg, #f0f0f0 calc(100% - 14px), #ccc calc(100% - 14px)); }
    .menu { left: 558px; top: 539px; width: 221px; padding: 1px 1px 1px; }
    .item { display: grid; grid-template-columns: 37px 1fr 29px; width: 100%; height: 30px; text-align: left; }
    .item .ic { margin-left: 4px; }
    .off { color: #999; }
    .more { display: flex; align-items: center; justify-content: center; height: 18px; border-left: 1px solid #ccc; }
    .more .ic { margin-left: 0; }
    .hot .more { height: 30px; background: #969696; border: 0; color: #666; }
    .hot .sym { display: flex; align-items: center; height: 30px; border: 1px solid #999; box-sizing: border-box; border-right: 0; }
    .hot .sym .ic { margin-left: 3px; }
    .line { height: 1px; background: #dcdcdc; margin: 1px 0 1px 38px; }
    .sub { left: 778px; top: 634px; width: 225px; padding: 1px; }
    .row { width: 100%; height: 30px; padding-left: 4px; gap: 12px; }
    .pick { background: #969696; color: #111; }
    .mark { position: absolute; left: 581px; top: 633px; width: 417px; height: 32px; box-sizing: border-box; border: 3px solid #f93a3a; pointer-events: none; }
    .pointer { position: absolute; left: 440px; top: 320px; pointer-events: none; }
  `];
  private tri = ic(6, 9, svg`<path d="M0 0l5 4.500L0 9z" fill="#505050"/>`);
  private item(i: unknown, t: unknown, more = false, cls = "") {
    return html`<button class="item ${cls}" role="menuitem"><span class="sym">${i}</span><span>${t}</span>${more ? html`<span class="more">${this.tri}</span>` : nothing}</button>`;
  }
  render() {
    return html`
      <div class="mini">
        <button class="tool"><span class="up">${bucket("#00b0f0", 30, 27)}${caret}</span>填充</button>
        <button class="tool"><span class="up">${outline(30, 27)}${caret}</span>边框</button>
        <span class="box"><select aria-label="series"><option>系列 "打卡"</option></select>${caret}</span>
      </div>
      <div class="menu" role="menu">
        ${this.item(nothing, key("删除", "D"))}${this.item(icons.menuReset, key("重设以匹配样式", "A"))}<div class="line"></div>
        ${this.item(icons.menuChart, key("更改系列图表类型", "Y", "..."))}${this.item(icons.menuEdit, key("编辑数据", "E"), true, "hot")}${this.item(icons.menuRotate, key("三维旋转", "R", "..."), false, "off")}<div class="line"></div>
        ${this.item(nothing, key("添加数据标签", "B"), true)}${this.item(nothing, key("添加趋势线", "R", "..."))}${this.item(icons.menuFormat, key("设置数据系列格式", "F", "..."))}<div class="line"></div>
        ${this.item(icons.menuComment, key("新建批注", "M"))}
      </div>
      <div class="sub" role="menu">
        <button class="row pick" role="menuitem">${icons.menuEdit}<span>${key("编辑数据", "E")}</span></button>
        <button class="row" role="menuitem">${icons.menuExcel}<span>${key("在 Excel 中编辑数据", "D")}</span></button>
      </div>
      <div class="mark"></div>
      <svg class="pointer" width="280" height="312"><path d="M4 5L14 9L12.500 11L271.300 308H270.700L9 14L7 15z" fill="#f93a3a"/></svg>`;
  }
}

@customElement("format-pane")
class FormatPane extends LitElement {
  static styles = [sharedText, css`
    :host { display: block; box-sizing: border-box; border-left: 1px solid #444; padding: 8px 13px 0 14px; color: #f0f0f0; }
    header { display: flex; align-items: center; line-height: 40px; height: 40px; }
    h2 { margin: 0 auto 0 0; font-size: 27px; font-weight: 400; line-height: 40px; color: #fff; }
    header button { margin-right: 8px; padding-bottom: 5px; } header .menu { margin-right: 41px; }
    .opts { font-weight: 700; line-height: 20px; margin: 9px 0 16px 5px; gap: 8px; color: #fff; }
    .kinds { display: flex; gap: 19px; align-items: center; padding-left: 6px; height: 28px; }
    .under { display: flex; height: 11px; margin: 10px 0 0; }
    .under svg { display: block; } .under span { flex: 1; border-bottom: 1px solid #b5b5b5; }
    .sec { font-weight: 700; height: 30px; padding-left: 6px; color: #fff; gap: 9px; }
    .radios { margin: 4px 0 0 27px; }
    .radios label { display: flex; align-items: center; height: 30px; gap: 6px; }
    input { appearance: none; width: 15px; height: 15px; margin: 0; border: 1px solid #2e2e2e; border-radius: 50%; background: #444; flex: none; }
    input:checked { background: radial-gradient(circle, #f4f4f4 3px, #444 4px); }
    .color { display: flex; align-items: center; justify-content: space-between; margin: 5px 24px 0 26px; padding: 8px 0 0 10px; border-top: 1px solid #b0b0b0; }
    .color > span { padding-bottom: 3px; }
    .swatch { width: 50px; height: 30px; box-sizing: border-box; border: 1px solid #555; background: #d6d6d6; color: #444; padding-left: 7px; gap: 7px; }
    .edge { margin-top: 10px; gap: 10px; }
  `];
  @state() private fill = 5;
  render() {
    const fills = [["无填充", "N"], ["纯色填充", "S"], ["渐变填充", "G"], ["图片或纹理填充", "P"], ["图案填充", "A"], ["自动", "U"]];
    return html`
      <header><h2>设置数据系列格式</h2>
        <button class="menu" aria-label="options">${ic(11, 6, svg`<path d="M0 0h11L5.500 6z" fill="#f4f4f4"/>`)}</button>
        <button aria-label="close">${ic(10, 10, svg`<path d="M.5 .5l9 9M9.500 .5l-9 9" stroke="#f4f4f4" stroke-width="2.400"/>`)}</button></header>
      <button class="opts">系列选项${ic(11, 7, svg`<path d="M0 0h11L5.500 7z" fill="#c0c0c0"/>`)}</button>
      <div class="kinds">
        <button aria-label="fill">${ic(28, 28, svg`<path d="M14 6Q26 7 26 16Q25 20 22 24Q24 17 20 12z" fill="#fff"/><path d="M11 5L21 15L11 25L1 15z" fill="#b73a1c" stroke="#fff" stroke-width="1.200"/><path d="M8.500 7V2.500Q10 0 12 2.500V10" stroke="#fff" stroke-width="1.200"/><circle cx="12" cy="11" r="1.500" fill="#fff"/>`)}</button>
        <button aria-label="effects">${ic(26, 28, svg`<path d="M13 1L24 9.500L20 21.500H6L1.500 9.500z" stroke="#e8e8e8" stroke-width="1.200"/><path d="M5 22.500h16" stroke="#fff" stroke-width="2"/><path d="M5 23l-1.500 5M21 23l1.500 5" stroke="#aaa"/>`)}</button>
        <button aria-label="series">${ic(28, 28, svg`<path d="M1.500 8.500h7v18h-7zM10.500 1.500h7v25h-7zM19.500 5.500h7v21h-7z" stroke="#e0e0e0"/>`)}</button>
      </div>
      <div class="under"><svg width="28" height="11"><path d="M0 10.500H11L19 1L27 10.500" fill="none" stroke="#b5b5b5"/></svg><span></span></div>
      <button class="sec">${ic(11, 9, svg`<path d="M10 0v9H1z" fill="#f4f4f4"/>`)}填充</button>
      <div class="radios">${fills.map(([t, l], k) => html`<label><input type="radio" name="fill" .checked=${this.fill === k} @change=${() => (this.fill = k)}><span>${key(t, l)}</span></label>`)}</div>
      <div class="color"><span>${key("颜色", "C")}</span><button class="swatch" aria-label="color">${bucket("#4472c4")}${ic(9, 5, svg`<path d="M0 0h9L4.500 5z" fill="#444"/>`)}</button></div>
      <button class="sec edge">${ic(10, 12, svg`<path d="M3.500 1v10l5-5z" stroke="#f0f0f0"/>`)}边框</button>`;
  }
}

@customElement("app-root")
class AppRoot extends LitElement {
  static styles = [sharedText, css`
    :host { display: flex; flex-direction: column; height: 100vh; overflow: hidden; position: relative; background: #666; font: 15px/20px "Noto Sans", "Noto Sans CJK SC", sans-serif; color: #f2f2f2; }
    .quick { display: flex; align-items: center; height: 45px; padding: 0 0 2px 6px; gap: 17px; box-sizing: border-box; flex: none; }
    .quick button { gap: 3px; }
    .quick .first { padding-right: 3px; }
    main { display: flex; flex: 1; min-height: 0; }
    .nav { width: 145px; box-sizing: border-box; border-right: 1px solid #8c8c8c; padding-top: 17px; flex: none; }
    .thumb { width: 100%; align-items: flex-start; gap: 18px; padding-left: 10px; height: 69px; font-size: 18px; }
    .num { width: 10px; }
    .thumb svg { margin-top: 3px; }
    .stage { flex: 1; min-width: 0; padding: 156px 6px 0 8px; }
    .slide { position: relative; aspect-ratio: 16 / 9; background: #fff; }
    .chart { position: absolute; left: 125px; top: 38px; }
    .side { position: absolute; left: 682px; top: 47px; display: flex; flex-direction: column; gap: 12px; }
    .side button { width: 35px; height: 35px; border: 1px solid #ababab; box-sizing: border-box; background: #fff; justify-content: center; }
    .scroll { width: 20px; background: #555; display: flex; flex-direction: column; justify-content: space-between; flex: none; }
    .up { height: 17px; background: #999; border: 1px solid #444; margin-right: 2px; }
    .knob { height: 294px; background: #999; border: 1px solid #444; border-bottom: 0; }
    .pane { width: 354px; flex: none; }
    .float { position: absolute; left: 131px; top: 133px; width: 843px; height: 275px; }
    .m1 { font: bold 4px "Noto Sans CJK SC", sans-serif; fill: #fff; }
  `];
  render() {
    return html`
      <office-ribbon></office-ribbon>
      <div class="quick"><button class="first" aria-label="save">${icons.save}</button><button aria-label="undo">${icons.undo}${caret}</button><button aria-label="repeat">${icons.redoTurn}</button><button aria-label="page">${icons.page}</button></div>
      <main>
        <nav class="nav">
          <button class="thumb"><span class="num">1</span><svg width="82" height="49" viewBox="0 0 82 49">
            <path d="M1 1h80v47H1z" fill="#222"/><path d="M2.500 2.500h77v44h-77z" fill="#000" stroke="#fff"/>
            <text x="41" y="11" class="m1" text-anchor="middle">一年级安排表</text><text x="41" y="15" class="m1" text-anchor="middle">日安排</text>
            <path d="M14 17h54v6H14z" fill="#0a9bd6"/><path d="M14 23h54v19H14z" fill="#808080"/><path d="M14 29.500h54M14 35.500h54M32 17v25M50 17v25" stroke="#555" stroke-width=".6"/>
            ${[23, 41, 59].map((x) => svg`<path d="M${x - 2} 20.500h4" stroke="#fff"/><path d="M${x - 2} 26h4M${x - 3} 32.500h6M${x - 4} 39h8" stroke="#555"/>`)}</svg></button>
          <button class="thumb"><span class="num">2</span><svg width="84" height="52" viewBox="0 0 84 52">
            <path d="M1.500 1.500h81v49h-81z" fill="#fff" stroke="#d24726" stroke-width="3"/>
            <path d="M19 13.500h46M19 17.500h46M19 21.500h46" stroke="#d9d9d9"/>
            <path d="M19 39V15L30 20L41 18L52 29V39z" fill="#4472c4"/><path d="M19 39V30.500H42L53 24L65 18V39z" fill="#ed7d31"/>
            <path d="M36 10.500h11M17 40.500h4M28 40.500h4M40 40.500h4M51 40.500h4M63 40.500h3M39 42.500h6" stroke="#777" stroke-width=".7"/></svg></button>
        </nav>
        <div class="stage"><div class="slide">
          <series-chart class="chart"></series-chart>
          <div class="side">
            <button aria-label="elements">${ic(14, 14, svg`<path d="M7 0v14M0 7h14" stroke="#4c9077" stroke-width="4"/>`)}</button>
            <button aria-label="styles">${ic(18, 18, svg`<path d="M17.500 0Q10 5 8 10l3 2Q16 7 17.500 3z" fill="#444"/><path d="M8 10Q12 11 10 14Q7 18 0 17Q3 15 4 12.500Q5.500 10 8 10z" fill="#2a6099"/><path d="M8 12Q6 12 6 14Q8 14 8 12z" fill="#fff"/>`)}</button>
            <button aria-label="filter">${ic(18, 18, svg`<path d="M0 1h18v2l-7 6.500V15l-4 2V9.500L0 3z" fill="#505050"/><path d="M3 3l5.500 5.500V15" stroke="#fff"/>`)}</button>
          </div>
        </div></div>
        <div class="scroll"><span class="up"></span><span class="knob"></span></div>
        <format-pane class="pane"></format-pane>
      </main>
      <data-window class="float"></data-window>
      <context-menus></context-menus>`;
  }
}
